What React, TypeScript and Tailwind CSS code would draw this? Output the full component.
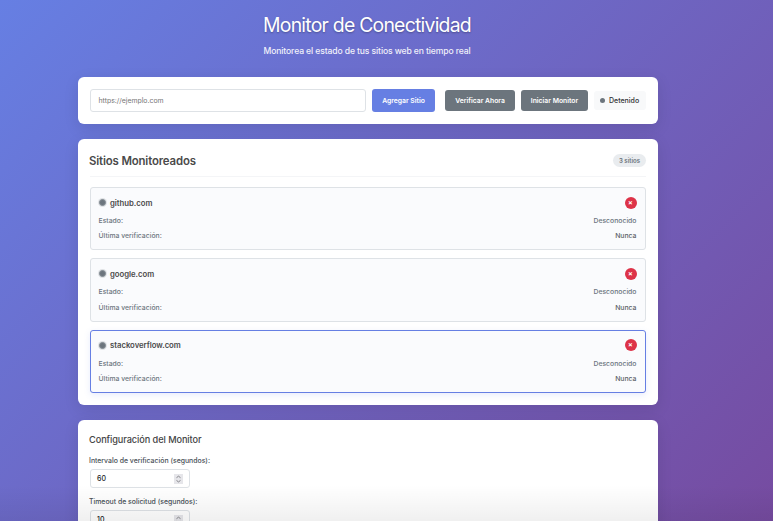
const sites = [
  { name: 'github.com', box: 'mt-[10px] h-[63px] border-[#dee2e6]', label: 'pt-[3px]', action: '', rows: 'gap-[6px]' },
  { name: 'google.com', box: 'mt-2 h-16 border-[#dee2e6]', label: 'pt-[3px]', action: '', rows: 'gap-[7px]' },
  {
    name: 'stackoverflow.com',
    box: 'mt-2 h-[63px] border-[#667fe3] shadow-[0_2px_6px_rgba(102,126,234,0.15)]',
    label: 'pt-px',
    action: 'mb-px',
    rows: 'gap-[6px]',
  },
];

function Spinner() {
  return (
    <svg className="h-[10px] w-[9px] bg-[#e6e6ea]" viewBox="0 0 9 10" fill="none" stroke="#85858b" strokeWidth="1">
      <path d="M2.5 3.7 4.5 2.2l2 1.5M2.5 6.4l2 1.5 2-1.5" />
    </svg>
  );
}

function NumberField({ label, value }: { label: string; value: string }) {
  return (
    <div className="h-[41px]">
      <div className="-ml-px h-[9px] text-[6.9px] leading-[9px] font-medium whitespace-nowrap text-[#495057]">{label}</div>
      <div className="mt-1 flex h-[19px] w-[100px] items-center justify-between rounded-[3px] border border-[#dee2e6] bg-white pr-[6px] pl-[6px] text-[7px] font-medium text-[#212529]">
        <span className="pt-px">{value}</span>
        <Spinner />
      </div>
    </div>
  );
}

export default function App() {
  return (
    <div className="relative h-[521px] w-[773px] overflow-hidden bg-linear-[135deg,#667fe3_0%,#764ba0_100%] font-['Inter',sans-serif] text-[#333]">
      <header className="flex h-[77px] w-[734px] flex-col items-center text-white">
        <h1 className="mt-[13px] h-6 text-[19.4px] leading-6 font-normal tracking-[-0.76px] whitespace-nowrap [text-shadow:0_1px_2px_rgba(0,0,0,0.3)]">
          Monitor de Conectividad
        </h1>
        <p className="mt-[8px] text-[8.6px] leading-3 font-medium tracking-[-0.12px] whitespace-nowrap opacity-90">
          Monitorea el estado de tus sitios web en tiempo real
        </p>
      </header>

      <main className="ml-[78px] flex w-[580px] flex-col gap-[15px]">
        <section className="flex h-[47px] items-center rounded-[6px] bg-white px-3 text-[7px] shadow-[0_4px_15px_rgba(0,0,0,0.1)]">
          <div className="flex h-[23px] w-[276px] items-center rounded-[3px] border border-[#dee2e6] pt-px pl-[7.5px] text-[6.9px] text-[#757575]">
            https://ejemplo.com
          </div>
          <button className="ml-[6px] h-[23px] w-[63px] rounded-[3px] bg-[#667fe3] pt-px text-[6.8px] font-semibold whitespace-nowrap text-white">
            Agregar Sitio
          </button>
          <button className="ml-[10px] h-[21px] w-[70px] rounded-[3px] bg-[#6c757d] pt-px text-[6.8px] font-semibold whitespace-nowrap text-white">
            Verificar Ahora
          </button>
          <button className="ml-[6px] h-[21px] w-[67px] rounded-[3px] bg-[#6c757d] pt-px text-[6.8px] font-semibold whitespace-nowrap text-white">
            Iniciar Monitor
          </button>
          <div className="ml-[6px] flex h-[19px] w-[52px] items-center rounded-[3px] bg-[#f8f9fa] pl-[6px] text-[7px] font-medium">
            <span className="mr-[4px] size-[5px] rounded-full bg-[#6c757d]" />
            <span className="pt-px">Detenido</span>
          </div>
        </section>

        <section className="h-[266px] rounded-[6px] bg-white px-3 shadow-[0_4px_15px_rgba(0,0,0,0.1)]">
          <div className="flex h-[38px] items-center justify-between border-b border-[#f4f5f7] pt-[6px]">
            <h2 className="-ml-px pt-[2px] text-[11.4px] font-semibold tracking-[-0.15px] text-[#4a4a4a]">
              Sitios Monitoreados
            </h2>
            <span className="flex h-[13px] w-[33px] items-center justify-center rounded-full bg-[#e9ecef] pt-px text-[6.1px] font-semibold text-[#6c757d]">
              3 sitios
            </span>
          </div>
          {sites.map((s) => (
            <div key={s.name} className={`rounded-[3px] border bg-[#fafbfd] pr-[8.5px] pl-[7.5px] ${s.box}`}>
              <div className="flex h-[28px] items-center pt-px">
                <span className="size-[7px] rounded-full border border-[#858d94] bg-[#6c757d] shadow-[0_0_0_1px_#dfe2e5]" />
                <span className={`ml-[4.5px] text-[7.75px] font-semibold tracking-[-0.03px] text-[#4a4a4a] ${s.label}`}>
                  {s.name}
                </span>
                <span
                  className={`ml-auto flex size-3 items-center justify-center rounded-full bg-[#dd3348] pt-px text-[7px] font-bold text-white ${s.action}`}
                >
                  ×
                </span>
              </div>
              <div className={`flex flex-col text-[6.85px] leading-[9px] font-medium text-[#6c757d] ${s.rows}`}>
                <div className="flex justify-between">
                  <span>Estado:</span>
                  <span>Desconocido</span>
                </div>
                <div className="flex justify-between">
                  <span>Última verificación:</span>
                  <span className="text-[#5a6066]">Nunca</span>
                </div>
              </div>
            </div>
          ))}
        </section>

        <section className="h-[160px] rounded-[6px] bg-white px-3 pt-3 shadow-[0_4px_15px_rgba(0,0,0,0.1)]">
          <div>
            <h3 className="mb-[9px] -ml-px h-[15px] text-[9.2px] leading-[15px] font-medium tracking-[-0.08px] text-[#444]">
              Configuración del Monitor
            </h3>
            <NumberField label="Intervalo de verificación (segundos):" value="60" />
            <NumberField label="Timeout de solicitud (segundos):" value="10" />
          </div>
        </section>
      </main>
      <div className="pointer-events-none absolute inset-x-0 bottom-0 h-9 bg-linear-to-b from-black/0 to-black/6" />
    </div>
  );
}
